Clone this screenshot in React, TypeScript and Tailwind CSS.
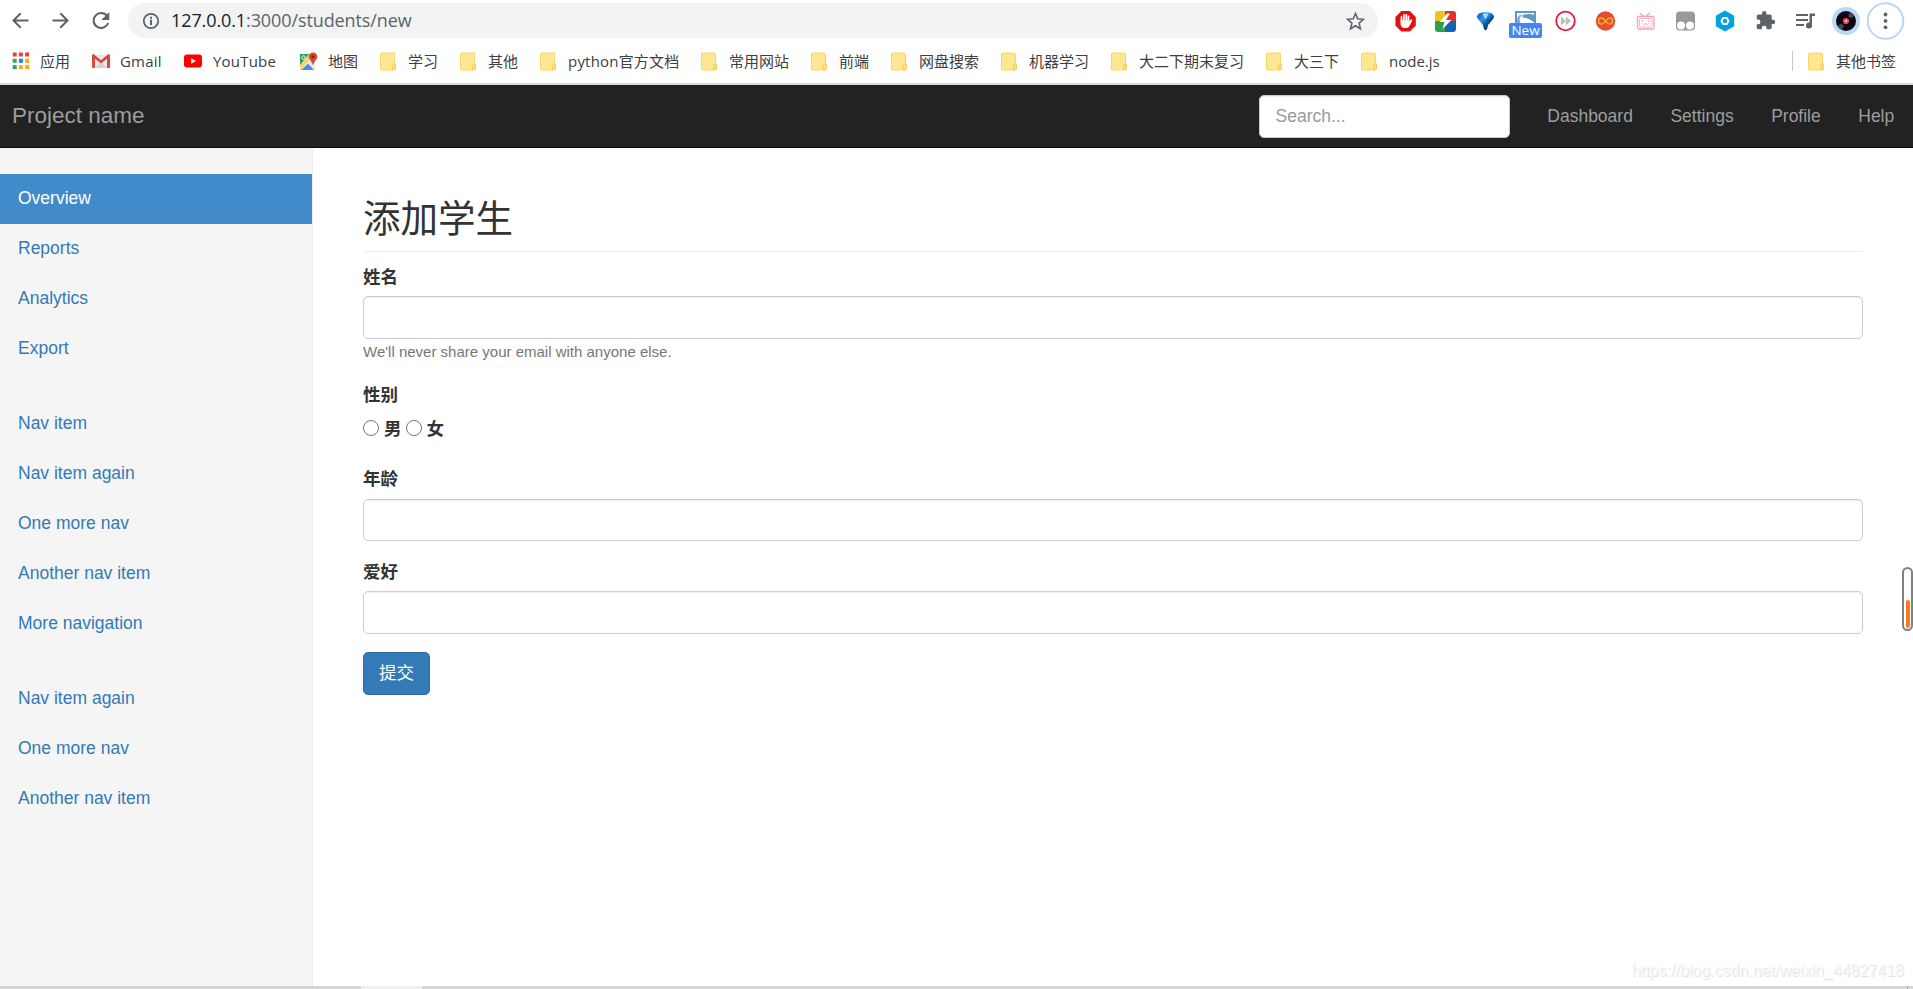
import type { ReactNode } from "react";

const navLinks = ["Dashboard", "Settings", "Profile", "Help"];

const sidebarGroups = [
  ["Overview", "Reports", "Analytics", "Export"],
  ["Nav item", "Nav item again", "One more nav", "Another nav item", "More navigation"],
  ["Nav item again", "One more nav", "Another nav item"],
];

const Apps = () => (
  <svg width="18" height="18" viewBox="0 0 18 18">
    {[
      ["#ea4335", "#ea4335", "#ea4335"],
      ["#34a853", "#1a82e8", "#fbac05"],
      ["#34a853", "#fbac05", "#fbac05"],
    ].map((row, y) =>
      row.map((c, x) => (
        <rect key={`${x}${y}`} x={0.7 + x * 6.2} y={0.5 + y * 6.3} width="4" height="4" fill={c} />
      ))
    )}
  </svg>
);

const Gmail = () => (
  <svg width="18" height="18" viewBox="0 0 18 18">
    <path d="M1 3h16v13H1z" fill="#e8e8e8" />
    <path d="M3 16l6-6 6 6z" fill="#d4d4d4" />
    <path d="M0 3.5Q0 2 1.5 2L9 8.2 16.500 2Q18 2 18 3.500V15q0 1-1 1h-2V6.800L9 11.600 3 6.800V16H1q-1 0-1-1z" fill="#d6493c" />
  </svg>
);

const YouTube = () => (
  <svg width="18" height="18" viewBox="0 0 18 18">
    <rect y="2.500" width="18" height="13" rx="3" fill="#f00" />
    <path d="M7.200 6.200v5.600L12 9z" fill="#fff" />
  </svg>
);

const Maps = () => (
  <svg width="19" height="19" viewBox="0 0 19 19">
    <path d="M1 2h15v16H1z" fill="#e8eaed" />
    <path d="M1 2h12L1 15z" fill="#1ea362" />
    <path d="M10 2h4L2.500 18H1v-5z" fill="#fdd663" />
    <path d="M2.500 18l6.500-6.500 6 6.500z" fill="#4a89f3" />
    <circle cx="4.600" cy="5.600" r="1.800" fill="none" stroke="#fff" strokeWidth="1" />
    <path d="M14 .5a4.300 4.300 0 0 1 4.300 4.300c0 3-3.300 4-4.300 9-1-5-4.300-6-4.300-9A4.300 4.300 0 0 1 14 .5z" fill="#db4437" />
    <circle cx="14" cy="4.800" r="1.500" fill="#7b231c" />
  </svg>
);

const Folder = () => (
  <svg width="17" height="19" viewBox="0 0 17 19">
    <path d="M1.500 1h12a1 1 0 0 1 1 1v9.500h1v5a1.500 1.500 0 0 1-1.500 1.500H1.500a1 1 0 0 1-1-1V2a1 1 0 0 1 1-1z" fill="#ffe692" stroke="#f6d964" />
    <path d="M12.500 17.500v-4q0-1.500 1.500-1.500t1.500 1.500v3q0 1-1 1z" fill="#fde07a" stroke="#f2cf55" />
  </svg>
);

const bookmarks: { label: string; icon: ReactNode; width: string; gap: string }[] = [
  { label: "应用", icon: <Apps />, width: "w-[80px]", gap: "w-[28px]" },
  { label: "Gmail", icon: <Gmail />, width: "w-[92px]", gap: "w-[28px]" },
  { label: "YouTube", icon: <YouTube />, width: "w-[115px]", gap: "w-[29px]" },
  { label: "地图", icon: <Maps />, width: "w-[81px]", gap: "w-[29px]" },
  { label: "学习", icon: <Folder />, width: "w-[80px]", gap: "w-[28px]" },
  { label: "其他", icon: <Folder />, width: "w-[80px]", gap: "w-[28px]" },
  { label: "python官方文档", icon: <Folder />, width: "w-[161px]", gap: "w-[28px]" },
  { label: "常用网站", icon: <Folder />, width: "w-[110px]", gap: "w-[28px]" },
  { label: "前端", icon: <Folder />, width: "w-[80px]", gap: "w-[28px]" },
  { label: "网盘搜索", icon: <Folder />, width: "w-[110px]", gap: "w-[28px]" },
  { label: "机器学习", icon: <Folder />, width: "w-[110px]", gap: "w-[28px]" },
  { label: "大二下期末复习", icon: <Folder />, width: "w-[155px]", gap: "w-[28px]" },
  { label: "大三下", icon: <Folder />, width: "w-[95px]", gap: "w-[28px]" },
  { label: "node.js", icon: <Folder />, width: "w-[90px]", gap: "w-[28px]" },
];

function ToolbarIcons() {
  return (
    <div className="flex items-center">
      {/* adblock */}
      <svg className="w-10" height="40" viewBox="0 0 40 40">
        <path d="M16.400 10h8.400l6 6v8.400l-6 6h-8.400l-6-6V16z" fill="#e60f0f" />
        <path
          d="M16.500 21v-5.200M18.900 19.500v-5.500M21.300 19.500v-5.500M23.500 20v-4.500"
          stroke="#fff"
          strokeWidth="1.800"
          strokeLinecap="round"
        />
        <path d="M15.600 19.500h8.800v1.200l1.200-1.900a.9.900 0 0 1 1.500 1l-2.600 5.200q-1 2-3 2h-2q-2.900 0-3.900-3.500z" fill="#fff" />
      </svg>
      {/* lightning */}
      <svg className="w-10" height="40" viewBox="0 0 40 40">
        <path d="M13 10h9v11H10v-8a3 3 0 0 1 3-3z" fill="#f2c21c" />
        <path d="M20 10h8a3 3 0 0 1 3 3v8H20z" fill="#e2322c" />
        <path d="M10 20h11v11h-8a3 3 0 0 1-3-3z" fill="#2f9e4d" />
        <path d="M20 20h11v8a3 3 0 0 1-3 3h-8z" fill="#1565b0" />
        <path d="M22 12.500L14.500 21h5L17.500 28 26.500 19H21l4-6.500z" fill="#fff" />
      </svg>
      {/* drop */}
      <svg className="w-10" height="40" viewBox="0 0 40 40">
        <defs>
          <linearGradient id="drop" x1="0" y1="0" x2="1" y2="1">
            <stop offset="0" stopColor="#0b4a9c" />
            <stop offset=".35" stopColor="#2d9cf0" />
            <stop offset=".6" stopColor="#0c4f96" />
            <stop offset="1" stopColor="#03101f" />
          </linearGradient>
        </defs>
        <path d="M14 12.500q6.500-2.500 13 0 3.500 3 1 5.500-3 4-5 6-.5 4.500-2.500 5.500-2-1-2.500-5.500-2-2-5-6-2.500-2.500 1-5.500z" fill="url(#drop)" />
        <path d="M17.500 13q3-1.500 6 0l-3 5.500z" fill="#a6dcfc" />
      </svg>
      {/* image reader with badge */}
      <div className="relative h-10 w-10">
        <svg width="40" height="40" viewBox="0 0 40 40">
          <path d="M10 10h21v12H10z" fill="#5f9ac4" />
          <path d="M12 12h17v10H12z" fill="#fff" />
          <path d="M17.500 14q7-2 11.500 0v7.500q-4-4.500-11.500-5z" fill="#5f9ac4" />
          <path d="M12 22v-4q.5-4 5-4.500l-2.500 4.500 1 4z" fill="#7fb0d2" />
        </svg>
        <span className="absolute top-[22.5px] left-[4px] h-[15px] w-[33px] rounded-[2px] bg-[#4285f4] text-center font-['Open_Sans',sans-serif] text-[13.500px] leading-[15px] text-white">
          New
        </span>
      </div>
      {/* fast forward */}
      <svg className="w-10" height="40" viewBox="0 0 40 40">
        <circle cx="20.500" cy="20" r="9.300" fill="#fff" stroke="#e9183c" strokeWidth="1.800" />
        <path d="M16 15.500l5 4.500-5 4.500zM21 15.500l5 4.500-5 4.500z" fill="#bdbdbd" />
      </svg>
      {/* infinity */}
      <svg className="w-10" height="40" viewBox="0 0 40 40">
        <circle cx="20.500" cy="20" r="9.700" fill="#e94b35" />
        <path
          d="M20.500 20c-1.700-2.300-2.800-3-4-3a3 3 0 0 0 0 6c1.200 0 2.300-.7 4-3s2.800-3 4-3a3 3 0 0 1 0 6c-1.200 0-2.300-.7-4-3z"
          fill="none"
          stroke="#fbb41a"
          strokeWidth="1.300"
        />
      </svg>
      {/* tv */}
      <svg className="w-10" height="40" viewBox="0 0 40 40" fill="none" stroke="#f6a0b9" strokeWidth="1.300">
        <path d="M15 12.500l4 3M25 12l-4.500 3.500" />
        <rect x="12.500" y="15.500" width="16.500" height="12.500" rx="1.500" />
        <rect x="14.500" y="17.500" width="12.500" height="8.500" rx="1" strokeWidth=".8" />
        <path d="M16 20.500l2.500-1M25.500 20.500l-2.500-1M17.500 22.500q1.500 2 3.200 0 1.700 2 3.200 0M15 28v1.500M26.500 28v1.500" strokeWidth="1" />
      </svg>
      {/* tampermonkey */}
      <svg className="w-10" height="40" viewBox="0 0 40 40">
        <rect x="11" y="10.500" width="19" height="19" rx="4" fill="#999" />
        <circle cx="16" cy="24.500" r="4" fill="#fff" />
        <circle cx="25" cy="24.500" r="4" fill="#fff" />
      </svg>
      {/* hexagon */}
      <svg className="w-10" height="40" viewBox="0 0 40 40">
        <path d="M20 9.500l9.200 5.200v10.600l-9.200 5.200-9.200-5.200V14.700z" fill="#00a3dd" />
        <path d="M17.700 16.100h4.600l2.300 3.900-2.300 3.900h-4.600l-2.300-3.900z" fill="#fff" />
        <circle cx="20" cy="20" r="2.200" fill="#00a3dd" />
      </svg>
      {/* extensions */}
      <svg className="w-10" height="40" viewBox="0 0 40 40">
        <path transform="translate(10 9) scale(.88)" d="M20.500 11H19V7c0-1.100-.9-2-2-2h-4V3.500a2.500 2.500 0 0 0-5 0V5H4c-1.100 0-2 .9-2 2v3.800h1.500a2.700 2.700 0 0 1 0 5.400H2V20c0 1.100.9 2 2 2h3.800v-1.500a2.700 2.700 0 0 1 5.400 0V22H17c1.100 0 2-.9 2-2v-4h1.500a2.500 2.500 0 0 0 0-5z" fill="#5f6368" />
      </svg>
      {/* media queue */}
      <svg className="w-10" height="40" viewBox="0 0 40 40">
        <path d="M11 14h12M11 19h12M11 24h8" stroke="#5f6368" strokeWidth="2" />
        <path d="M24.500 12.500H30V15h-3v9.500a3 3 0 1 1-2.500-2.900z" fill="#5f6368" />
      </svg>
    </div>
  );
}

function Toolbar() {
  return (
    <div className="flex h-[41px] items-center bg-white">
      <svg className="w-10 shrink-0" height="41" viewBox="0 0 40 41" fill="none" stroke="#5f6368" strokeWidth="2">
        <path d="M28.500 20.500H14M20.700 13.300l-7.200 7.200 7.200 7.200" />
      </svg>
      <svg className="w-10 shrink-0" height="41" viewBox="0 0 40 41" fill="none" stroke="#5f6368" strokeWidth="2">
        <path d="M12.500 20.500H27M20.300 13.300l7.200 7.200-7.200 7.200" />
      </svg>
      <svg className="w-12 shrink-0" height="41" viewBox="0 0 48 41">
        <path d="M27 15.800a7.500 7.500 0 1 0 1.200 7.200" fill="none" stroke="#5f6368" strokeWidth="2.100" />
        <path d="M29.300 12v8h-8z" fill="#5f6368" />
      </svg>
      <div className="flex h-[35px] w-[1250px] shrink-0 items-center rounded-full bg-[#f1f3f4] pr-[13px] pl-[13.5px]">
        <svg width="18" height="18" viewBox="0 0 18 18">
          <circle cx="9" cy="9" r="7.200" fill="none" stroke="#5f6368" strokeWidth="1.800" />
          <path d="M9 7.800V13M9 4.700v2" stroke="#5f6368" strokeWidth="2" />
        </svg>
        <div className="relative -top-px ml-[11.500px] flex-1 font-['Open_Sans',sans-serif] text-[18px] leading-6 tracking-[-0.1px] text-[#5f6368]">
          <span className="text-[#202124]">127.0.0.1</span>:3000/students/new
        </div>
        <svg width="20" height="20" viewBox="0 0 20 20">
          <path d="M10.500 2.500l2.200 5.300 5.700.5-4.300 3.800 1.300 5.600-4.900-3-4.900 3 1.300-5.600-4.300-3.800 5.700-.5z" fill="none" stroke="#5f6368" strokeWidth="1.600" />
        </svg>
      </div>
      <div className="ml-[7px]">
        <ToolbarIcons />
      </div>
      <svg className="w-10 shrink-0" height="41" viewBox="0 0 40 41">
        <circle cx="21" cy="21" r="14" fill="#b9dbf6" />
        <circle cx="21" cy="21" r="10" fill="#0a0717" />
        <path d="M21 21l4-9a10 10 0 0 1 4.500 4zM21 21l-4 9a10 10 0 0 1-4.500-4z" fill="#4a4658" />
        <circle cx="21" cy="21" r="5" fill="#0a0717" />
        <circle cx="21" cy="21" r="3.100" fill="#ee3f5c" />
        <circle cx="21" cy="21" r="1.200" fill="#ffd27a" />
      </svg>
      <svg className="w-10 shrink-0" height="41" viewBox="0 0 40 41">
        <circle cx="20.500" cy="21" r="17.800" fill="#fff" stroke="#bcd4f6" strokeWidth="2" />
        <circle cx="20.500" cy="14.500" r="1.900" fill="#5f6368" />
        <circle cx="20.500" cy="20.900" r="1.900" fill="#5f6368" />
        <circle cx="20.500" cy="27.300" r="1.900" fill="#5f6368" />
      </svg>
    </div>
  );
}

function BookmarkBar() {
  return (
    <div className="flex h-11 items-start border-b-2 border-[#dadce0] bg-white pl-3 font-['Open_Sans','Noto_Sans_CJK_SC',sans-serif] text-[15px] leading-[40px] whitespace-nowrap text-[#3c4043]">
      {bookmarks.map((item) => (
        <div key={item.label} className={`flex h-10 shrink-0 items-center ${item.width}`}>
          <div className={`shrink-0 ${item.gap}`}>{item.icon}</div>
          <span className={/^[A-Zp]/.test(item.label) ? "tracking-[0.2px]" : ""}>{item.label}</span>
        </div>
      ))}
      <div className="mr-[17px] ml-auto flex h-10 items-center">
        <div className="mr-[15px] h-5 w-px bg-[#c6c8cb]" />
        <div className="w-[28px]">
          <Folder />
        </div>
        <span>其他书签</span>
      </div>
    </div>
  );
}

function Navbar() {
  return (
    <nav className="flex h-[63px] items-start justify-between border-b border-[#080808] bg-[#222] text-[#9d9d9d]">
      <a className="mt-[18px] ml-[12px] text-[22.5px] leading-[25px]">Project name</a>
      <div className="flex">
        <input
          className="mt-[10px] mr-[19px] h-[43px] w-[251px] rounded-[5px] border border-[#ccc] bg-white px-[16px] text-[17.5px] shadow-[inset_0_1px_1px_rgba(0,0,0,.075)] placeholder:text-[#999]"
          placeholder="Search..."
        />
        {navLinks.map((link) => (
          <a key={link} className="px-[18.75px] pt-[18.75px] text-[17.5px] leading-[25px]">
            {link}
          </a>
        ))}
      </div>
    </nav>
  );
}

function Sidebar() {
  return (
    <aside className="flex w-[313px] shrink-0 flex-col gap-[25px] border-r border-[#eee] bg-[#f5f5f5] pt-[26px]">
      {sidebarGroups.map((group, i) => (
        <ul key={i}>
          {group.map((item) => (
            <li
              key={item}
              className={`h-[50px] pt-[12px] pl-[18px] text-[17.5px] leading-[25px] ${
                item === "Overview" ? "bg-[#428bca] text-white" : "text-[#337ab7]"
              }`}
            >
              {item}
            </li>
          ))}
        </ul>
      ))}
    </aside>
  );
}

function Field({ label, hint }: { label: string; hint?: string }) {
  return (
    <div className="mb-[18.75px]">
      <label className="mb-[6.25px] block leading-[25px] font-bold">{label}</label>
      <input className="block h-[42.5px] w-full rounded-[5px] border border-[#ccc] bg-white px-[15px] shadow-[inset_0_1px_1px_rgba(0,0,0,.075)]" />
      {hint && <small className="block text-[15px] leading-[25px] text-[#777]">{hint}</small>}
    </div>
  );
}

function Radio({ label }: { label: string }) {
  return (
    <label className="flex items-center font-bold">
      <input type="radio" name="gender" className="mr-[5px] size-4 appearance-none rounded-full border border-[#767676] bg-white" />
      <span className="relative top-px">{label}</span>
    </label>
  );
}

function StudentForm() {
  return (
    <main className="flex-1 bg-white pr-[50px] pl-[50px] text-[17.5px] text-[#333]">
      <h2 className="mb-[13px] h-[104px] border-b border-[#eee] pt-[51px] text-[37.500px] leading-[41px]">添加学生</h2>
      <Field label="姓名" hint="We'll never share your email with anyone else." />
      <div className="mb-[18.75px] h-[66px]">
        <label className="block leading-[25px] font-bold">性别</label>
        <div className="mt-[8px] flex h-[25px] items-center gap-[4px]">
          <Radio label="男" />
          <Radio label="女" />
        </div>
      </div>
      <Field label="年龄" />
      <Field label="爱好" />
      <button className="h-[42.500px] w-[67px] rounded-[5px] border border-[#2e6da4] bg-[#337ab7] leading-[25px] text-white">
        提交
      </button>
    </main>
  );
}

export default function App() {
  return (
    <div className="relative flex h-[989px] w-[1913px] flex-col overflow-hidden bg-white font-['Liberation_Sans','Noto_Sans_CJK_SC',sans-serif]">
      <Toolbar />
      <BookmarkBar />
      <Navbar />
      <div className="flex min-h-0 flex-1">
        <Sidebar />
        <StudentForm />
      </div>
      <div className="flex h-[3px] shrink-0 bg-[#d6d6d6]">
        <div className="ml-[361px] w-[61px] bg-[#f0f0f0]" />
        <div className="ml-auto w-[6px] border-l border-[#aaa]" />
      </div>
      {/* floating progress gauge */}
      <div className="absolute top-[567px] right-0 flex h-[64px] w-[11px] items-end rounded-full border-2 border-[#808080] bg-white px-[1.5px] pb-px">
        <div className="h-[28px] w-full rounded-full bg-[#ff7722]" />
      </div>
      <span className="absolute right-[9px] bottom-[8px] text-[16px] leading-5 text-[#f8f8f8] [text-shadow:1px_1px_1px_#dedede]">
        https://blog.csdn.net/weixin_44827418
      </span>
    </div>
  );
}
